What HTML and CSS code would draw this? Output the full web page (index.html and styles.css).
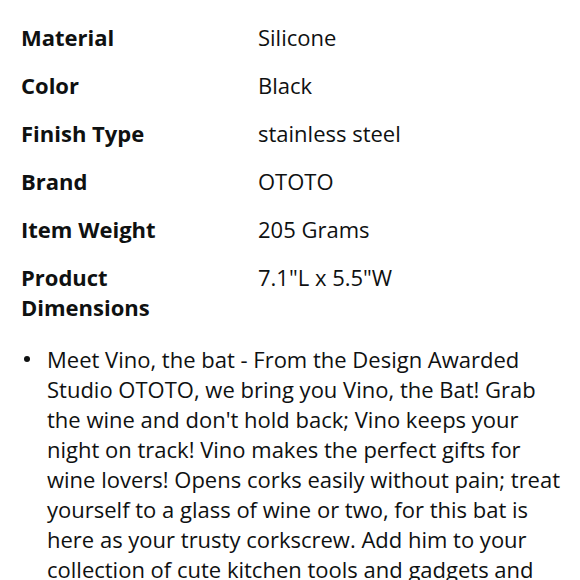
FILE: index.html
```html
<!DOCTYPE html>
<html>
<head>
<meta charset="utf-8">
<link rel="stylesheet" href="styles.css">
</head>
<body>
<div class="page">
  <table class="specs">
    <tr><th>Material</th><td>Silicone</td></tr>
    <tr><th>Color</th><td>Black</td></tr>
    <tr><th>Finish Type</th><td>stainless steel</td></tr>
    <tr><th>Brand</th><td>OTOTO</td></tr>
    <tr><th>Item Weight</th><td>205 Grams</td></tr>
    <tr><th>Product Dimensions</th><td>7.1"L x 5.5"W</td></tr>
  </table>
  <ul class="bullets">
    <li>Meet Vino, the bat - From the Design Awarded Studio OTOTO, we bring you Vino, the Bat! Grab the wine and don't hold back; Vino keeps your night on track! Vino makes the perfect gifts for wine lovers! Opens corks easily without pain; treat yourself to a glass of wine or two, for this bat is here as your trusty corkscrew. Add him to your collection of cute kitchen tools and gadgets and enjoy every sip.</li>
  </ul>
</div>
</body>
</html>
```
FILE: styles.css
```css
html, body {
  margin: 0;
  padding: 0;
  background: #fff;
}
body {
  font-family: "Open Sans", "Noto Sans", sans-serif;
  color: #0f1111;
  font-size: 22px;
}
.page {
  padding: 13px 0 0 21px;
}
.specs {
  border-collapse: collapse;
}
.specs th, .specs td {
  padding: 9px 0;
  line-height: 30px;
  vertical-align: top;
  text-align: left;
}
.specs th {
  width: 237px;
  max-width: 237px;
  font-weight: 700;
  padding-right: 40px;
  box-sizing: border-box;
}
.specs td {
  font-weight: 400;
}
.bullets {
  list-style: none;
  margin: 13px 0 0 0;
  padding: 0;
  line-height: 30px;
}
.bullets li {
  display: flex;
  padding-right: 16px;
}
.bullets li::before {
  content: "";
  flex: none;
  width: 6px;
  height: 6px;
  border-radius: 50%;
  background: #0f1111;
  margin: 12px 17px 0 3px;
}
```
